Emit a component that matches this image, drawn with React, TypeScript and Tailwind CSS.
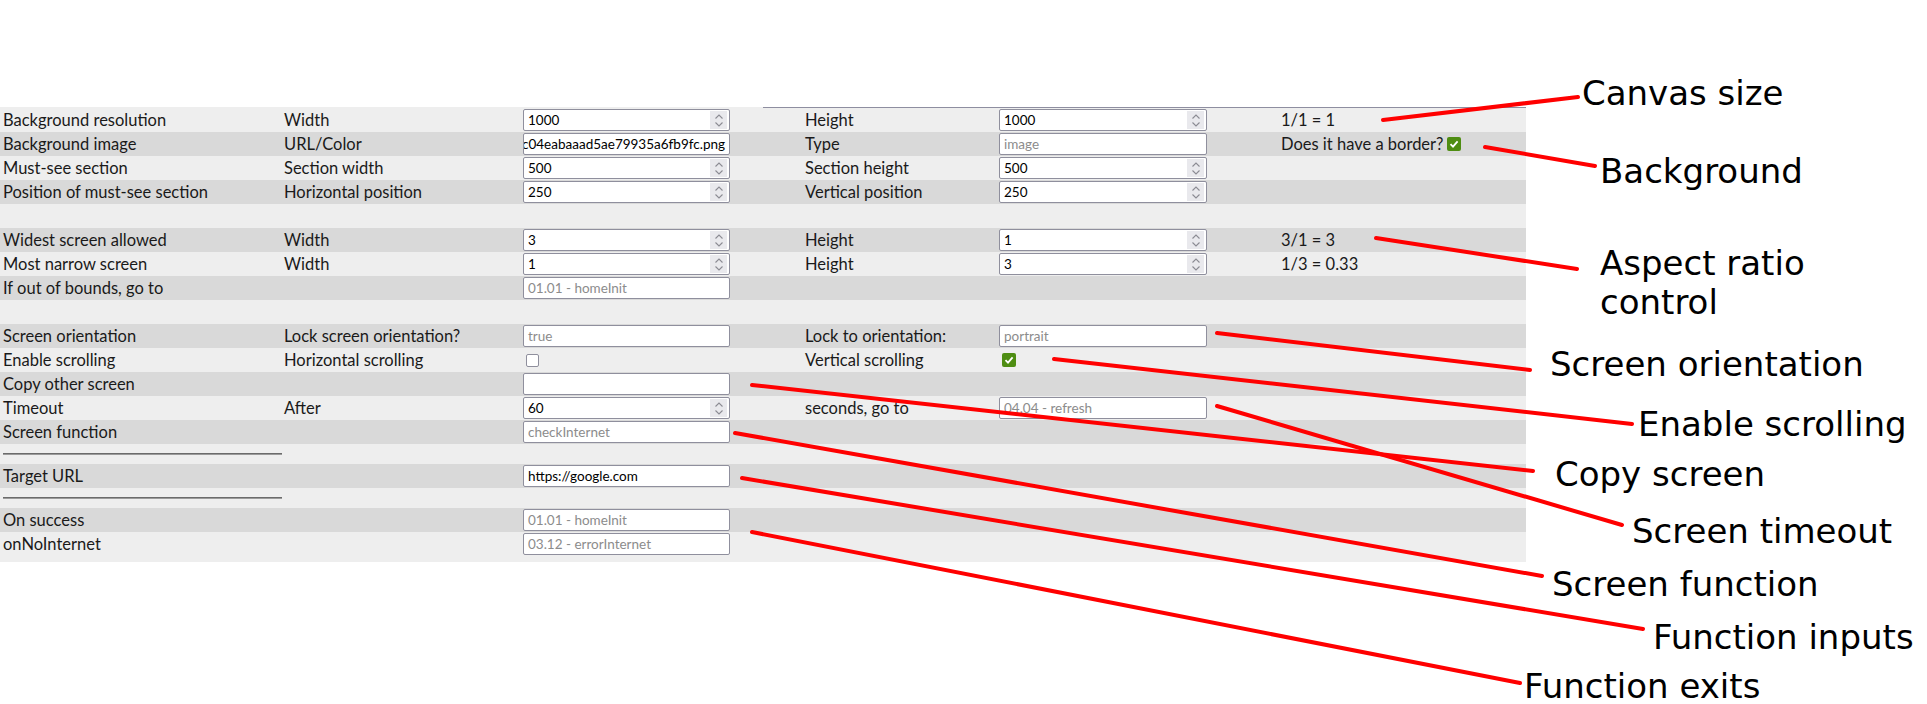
import React from 'react';

const ROW = 'grid grid-cols-[281px_239px_282px_194px_282px_248px] h-6 items-center';

function Cell({ children }: { children?: React.ReactNode }) {
  return <div className="pl-[3px] whitespace-nowrap flex items-center">{children}</div>;
}

function Chevrons() {
  return (
    <span className="w-[17px] h-[18px] bg-[#e9e9ed] flex flex-col items-center justify-center gap-[3px]">
      <svg width="8" height="5" viewBox="0 0 8 5" fill="none" stroke="#8b8b93" strokeWidth="1.1">
        <path d="M0.5 4.5 L4 1 L7.5 4.5" />
      </svg>
      <svg width="8" height="5" viewBox="0 0 8 5" fill="none" stroke="#8b8b93" strokeWidth="1.1">
        <path d="M0.5 0.5 L4 4 L7.5 0.5" />
      </svg>
    </span>
  );
}

function NumInput({ value, wide }: { value: string; wide?: boolean }) {
  return (
    <div
      className={`${wide ? 'w-[208px]' : 'w-[207px]'} h-[22px] bg-white border border-[#8f8f9d] rounded-[2px] flex items-center pl-1 pr-[2px] text-[13.5px] text-black`}
    >
      <span className="flex-1">{value}</span>
      <Chevrons />
    </div>
  );
}

function TextInput({
  value,
  placeholder,
  wide,
}: {
  value?: string;
  placeholder?: string;
  wide?: boolean;
}) {
  return (
    <div
      className={`${wide ? 'w-[208px]' : 'w-[207px]'} h-[22px] bg-white border border-[#8f8f9d] rounded-[2px] flex items-center pl-1 pr-1 text-[13.5px] overflow-hidden`}
    >
      {value ? (
        <span className="text-black">{value}</span>
      ) : (
        <span className="text-[#8c8c8c]">{placeholder}</span>
      )}
    </div>
  );
}

function Checked() {
  return (
    <span className="inline-flex w-[14px] h-[14px] rounded-[2px] bg-[#4e8d12] items-center justify-center">
      <svg width="10" height="10" viewBox="0 0 10 10" fill="none" stroke="white" strokeWidth="1.8">
        <path d="M1.5 5.2 L4 7.6 L8.6 2.4" />
      </svg>
    </span>
  );
}

function Unchecked() {
  return <span className="inline-block w-[13px] h-[13px] rounded-[2px] bg-white border border-[#8f8f9d]" />;
}

function Row({ dark, children }: { dark?: boolean; children?: React.ReactNode }) {
  return <div className={`${ROW} ${dark ? 'bg-[#d9d9d9]' : 'bg-[#eeeeee]'}`}>{children}</div>;
}

function Rule() {
  return (
    <div className="h-5 flex items-center pl-[3px]">
      <div className="w-[279px] border-t border-b border-t-[#6b6b6b] border-b-[#9a9a9a]" />
    </div>
  );
}

const lines: [number, number, number, number][] = [
  [1383, 120, 1578, 97],
  [1485, 147, 1595, 166],
  [1376, 238, 1577, 269],
  [1217, 333, 1530, 370],
  [1054, 359, 1632, 424],
  [752, 385, 1533, 471],
  [1217, 406, 1622, 525],
  [735, 433, 1542, 576],
  [742, 478, 1643, 629],
  [752, 532, 1520, 683],
];

const labels: { text: string; x: number; y: number }[] = [
  { text: 'Canvas size', x: 1582, y: 93 },
  { text: 'Background', x: 1600, y: 171 },
  { text: 'Aspect ratio', x: 1600, y: 263 },
  { text: 'control', x: 1600, y: 302 },
  { text: 'Screen orientation', x: 1550, y: 364 },
  { text: 'Enable scrolling', x: 1638, y: 424 },
  { text: 'Copy screen', x: 1555, y: 474 },
  { text: 'Screen timeout', x: 1632, y: 531 },
  { text: 'Screen function', x: 1552, y: 584 },
  { text: 'Function inputs', x: 1653, y: 637 },
  { text: 'Function exits', x: 1524, y: 686 },
];

export default function App() {
  return (
    <div className="relative w-[1927px] h-[704px] bg-white overflow-hidden font-['Lato',sans-serif] text-[16.5px] text-[#1a1a1a]">
      <div className="pt-[107px] w-[1526px]">
        {/* tab edge */}
        <div className="h-px bg-[#eeeeee]">
          <div className="ml-[763px] h-px bg-[#8e8ea0]" />
        </div>

        <div className="bg-[#eeeeee] pb-[6px]">
          <Row>
            <Cell>Background resolution</Cell>
            <Cell>Width</Cell>
            <Cell><NumInput value="1000" /></Cell>
            <Cell>Height</Cell>
            <Cell><NumInput value="1000" wide /></Cell>
            <Cell>1/1 = 1</Cell>
          </Row>
          <Row dark>
            <Cell>Background image</Cell>
            <Cell>URL/Color</Cell>
            <Cell>
              <div className="w-[207px] h-[22px] bg-white border border-[#8f8f9d] rounded-[2px] flex items-center justify-end pr-1 text-[13.5px] text-black overflow-hidden">
                <span className="whitespace-nowrap">c04eabaaad5ae79935a6fb9fc.png</span>
              </div>
            </Cell>
            <Cell>Type</Cell>
            <Cell><TextInput placeholder="image" wide /></Cell>
            <Cell>
              <span className="mr-1">Does it have a border?</span>
              <Checked />
            </Cell>
          </Row>
          <Row>
            <Cell>Must-see section</Cell>
            <Cell>Section width</Cell>
            <Cell><NumInput value="500" /></Cell>
            <Cell>Section height</Cell>
            <Cell><NumInput value="500" wide /></Cell>
            <Cell />
          </Row>
          <Row dark>
            <Cell>Position of must-see section</Cell>
            <Cell>Horizontal position</Cell>
            <Cell><NumInput value="250" /></Cell>
            <Cell>Vertical position</Cell>
            <Cell><NumInput value="250" wide /></Cell>
            <Cell />
          </Row>
          <Row />
          <Row dark>
            <Cell>Widest screen allowed</Cell>
            <Cell>Width</Cell>
            <Cell><NumInput value="3" /></Cell>
            <Cell>Height</Cell>
            <Cell><NumInput value="1" wide /></Cell>
            <Cell>3/1 = 3</Cell>
          </Row>
          <Row>
            <Cell>Most narrow screen</Cell>
            <Cell>Width</Cell>
            <Cell><NumInput value="1" /></Cell>
            <Cell>Height</Cell>
            <Cell><NumInput value="3" wide /></Cell>
            <Cell>1/3 = 0.33</Cell>
          </Row>
          <Row dark>
            <Cell>If out of bounds, go to</Cell>
            <Cell />
            <Cell><TextInput placeholder="01.01 - homeInit" /></Cell>
          </Row>
          <Row />
          <Row dark>
            <Cell>Screen orientation</Cell>
            <Cell>Lock screen orientation?</Cell>
            <Cell><TextInput placeholder="true" /></Cell>
            <Cell>Lock to orientation:</Cell>
            <Cell><TextInput placeholder="portrait" wide /></Cell>
            <Cell />
          </Row>
          <Row>
            <Cell>Enable scrolling</Cell>
            <Cell>Horizontal scrolling</Cell>
            <Cell><span className="pl-[3px] flex"><Unchecked /></span></Cell>
            <Cell>Vertical scrolling</Cell>
            <Cell><span className="pl-[3px] flex"><Checked /></span></Cell>
            <Cell />
          </Row>
          <Row dark>
            <Cell>Copy other screen</Cell>
            <Cell />
            <Cell><TextInput /></Cell>
          </Row>
          <Row>
            <Cell>Timeout</Cell>
            <Cell>After</Cell>
            <Cell><NumInput value="60" /></Cell>
            <Cell>seconds, go to</Cell>
            <Cell><TextInput placeholder="04.04 - refresh" wide /></Cell>
            <Cell />
          </Row>
          <Row dark>
            <Cell>Screen function</Cell>
            <Cell />
            <Cell><TextInput placeholder="checkInternet" /></Cell>
          </Row>

          <Rule />
          <Row dark>
            <Cell>Target URL</Cell>
            <Cell />
            <Cell><TextInput value="https://google.com" /></Cell>
          </Row>
          <Rule />
          <Row dark>
            <Cell>On success</Cell>
            <Cell />
            <Cell><TextInput placeholder="01.01 - homeInit" /></Cell>
          </Row>
          <Row>
            <Cell>onNoInternet</Cell>
            <Cell />
            <Cell><TextInput placeholder="03.12 - errorInternet" /></Cell>
          </Row>
        </div>
      </div>

      {/* annotation overlay */}
      <svg className="absolute inset-0 pointer-events-none" width="1927" height="704">
        {lines.map(([x1, y1, x2, y2], i) => (
          <line key={i} x1={x1} y1={y1} x2={x2} y2={y2} stroke="#ff0000" strokeWidth="4" strokeLinecap="round" />
        ))}
      </svg>
      {labels.map((l) => (
        <div
          key={l.text}
          className="absolute font-['DejaVu_Sans',sans-serif] text-[34px] leading-none text-black whitespace-nowrap"
          style={{ left: l.x, top: l.y - 17 }}
        >
          {l.text}
        </div>
      ))}
    </div>
  );
}
